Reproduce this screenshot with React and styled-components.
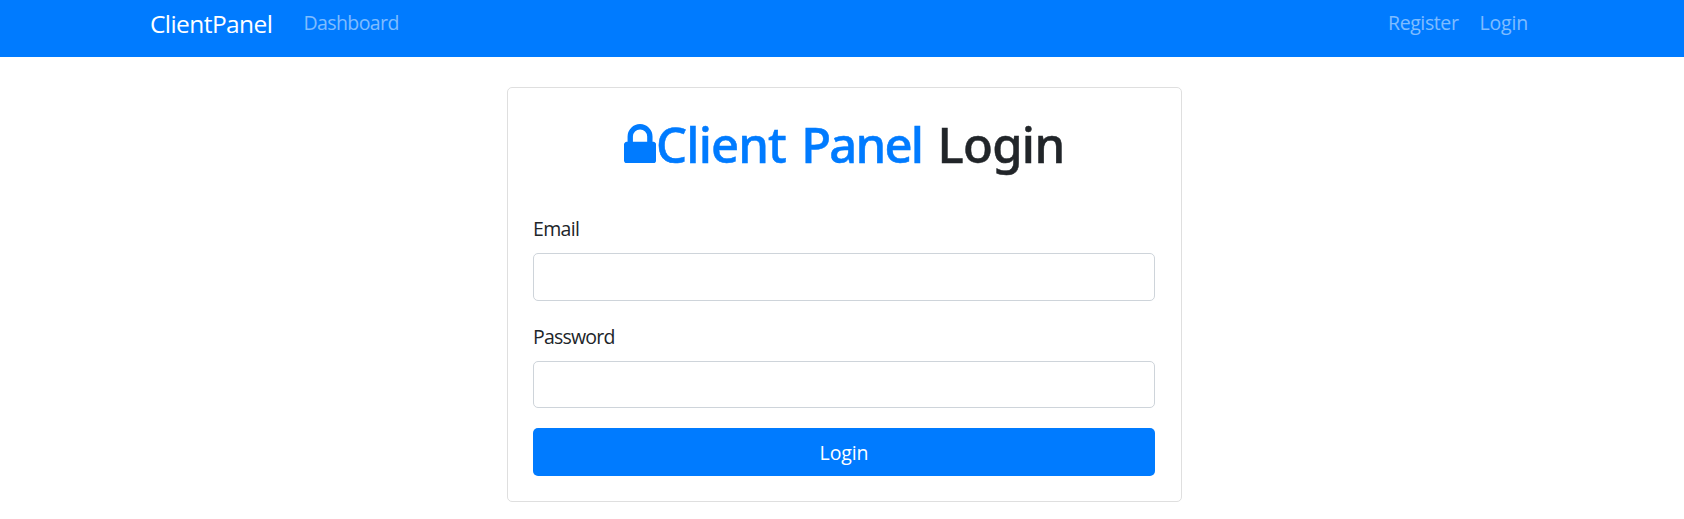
import React from "react";
import styled, { createGlobalStyle } from "styled-components";

const GlobalStyle = createGlobalStyle`
  *, *::before, *::after { box-sizing: border-box; }
  body {
    margin: 0;
    background: #fff;
    color: #212529;
    font-family: "Open Sans", "Noto Sans", sans-serif;
    font-size: 19.5px;
    line-height: 30px;
  }
`;

const Navbar = styled.nav`
  display: flex;
  align-items: flex-start;
  height: 57px;
  padding: 0 156px 0 150px;
  background: #007bff;
`;

const Brand = styled.a`
  margin-right: 31px;
  color: #fff;
  font-size: 24.5px;
  line-height: 47px;
  letter-spacing: -0.57px;
  text-decoration: none;
`;

const NavGroup = styled.div`
  display: flex;
  gap: 21px;
  margin-left: ${(p) => (p.$end ? "auto" : "0")};
`;

const NavLink = styled.a`
  color: rgba(255, 255, 255, 0.5);
  line-height: 45px;
  letter-spacing: ${(p) => p.$tracking};
  text-decoration: none;
`;

const Main = styled.main`
  display: flex;
  justify-content: center;
  padding: 30px 0 17px 5px;
`;

const Card = styled.section`
  width: 675px;
  padding: 26px 26px 25px 25px;
  border: 1px solid #dfdfdf;
  border-radius: 5px;
`;

const Title = styled.h1`
  display: flex;
  align-items: flex-start;
  margin: 0 0 39px 91px;
  font-family: "Noto Sans", "Open Sans", sans-serif;
  font-size: 49px;
  font-weight: 500;
  line-height: 60px;
  -webkit-text-stroke: 0.5px currentColor;
`;

const LockIcon = styled.svg`
  flex: none;
  width: 32.1px;
  height: 39.3px;
  margin-top: 9.7px;
  fill: #007bff;
`;

const TitleWord = styled.span`
  margin-right: 15.3px;
  color: ${(p) => (p.$primary ? "#007bff" : "inherit")};
  letter-spacing: ${(p) => p.$tracking};
`;

const Field = styled.div`
  margin-bottom: 20px;
`;

const Label = styled.label`
  display: block;
  padding-top: 1px;
  margin-bottom: 9px;
  letter-spacing: ${(p) => p.$tracking};
`;

const Input = styled.input`
  display: block;
  width: 100%;
  height: ${(p) => p.$height};
  padding: 8px 15px;
  border: 1px solid #ced4da;
  border-radius: 5px;
  background: #fff;
  font: inherit;
`;

const Button = styled.button`
  display: block;
  width: 100%;
  height: 48px;
  padding: 2px 0 0;
  border: 0;
  border-radius: 5px;
  background: #007bff;
  color: #fff;
  font: inherit;
  letter-spacing: -0.1px;
`;

export default function App() {
  return (
    <>
      <GlobalStyle />
      <Navbar>
        <Brand>ClientPanel</Brand>
        <NavGroup>
          <NavLink $tracking="-0.58px">Dashboard</NavLink>
        </NavGroup>
        <NavGroup $end>
          <NavLink $tracking="-0.4px">Register</NavLink>
          <NavLink $tracking="-0.17px">Login</NavLink>
        </NavGroup>
      </Navbar>
      <Main>
        <Card>
          <Title>
            <LockIcon viewBox="0 128 1152 1408" aria-hidden="true">
              <path d="M320 768h512v-192q0-106-75-181t-181-75-181 75-75 181v192zm832 96v576q0 40-28 68t-68 28h-960q-40 0-68-28t-28-68v-576q0-40 28-68t68-28h32v-192q0-184 132-316t316-132 316 132 132 316v192h32q40 0 68 28t28 68z" />
            </LockIcon>
            <TitleWord $primary $tracking="-0.9px">Client</TitleWord>
            <TitleWord $primary $tracking="-1.8px">Panel</TitleWord>
            <TitleWord $tracking="-0.7px">Login</TitleWord>
          </Title>
          <form>
            <Field>
              <Label htmlFor="email" $tracking="-0.65px">Email</Label>
              <Input id="email" type="email" $height="48px" />
            </Field>
            <Field>
              <Label htmlFor="password" $tracking="-0.78px">Password</Label>
              <Input id="password" type="password" $height="47px" />
            </Field>
            <Button type="button">Login</Button>
          </form>
        </Card>
      </Main>
    </>
  );
}
